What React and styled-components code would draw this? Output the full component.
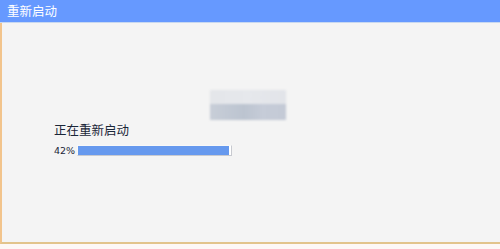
import React from 'react';
import styled, { createGlobalStyle } from 'styled-components';

const GlobalStyle = createGlobalStyle`
  html, body { margin: 0; padding: 0; background: #f4f4f4; }
  body { font-family: "Noto Sans CJK SC", "Liberation Sans", sans-serif; }
`;

const Window = styled.div`
  width: 500px;
  height: 249px;
  display: flex;
  flex-direction: column;
  background: #fdf8f6;
  overflow: hidden;
`;

const TitleBar = styled.div`
  height: 22px;
  flex: none;
  background: #6699ff;
  color: #ffffff;
  font-size: 12.5px;
  line-height: 21px;
  padding-left: 7px;
  border-bottom: 1px solid #c8d8f0;
`;

const Body = styled.div`
  flex: none;
  height: 219px;
  background: #f4f4f4;
  border-left: 2px solid #f2c48c;
  border-bottom: 2px solid #e2c48c;
  position: relative;
`;

const Blur = styled.div`
  position: absolute;
  left: 208px;
  top: 67px;
  width: 76px;
  height: 30px;
  display: flex;
  flex-direction: column;
  filter: blur(1px);
`;

const BlurTop = styled.div`
  flex: 1;
  background: linear-gradient(90deg, #e4e6ea, #e6e8ec 50%, #e2e4e9);
`;

const BlurBottom = styled.div`
  flex: 1.1;
  background: linear-gradient(90deg, #c8ced8, #bcc4d0 45%, #c6ccd8 70%, #c4cad6);
`;

const Content = styled.div`
  position: absolute;
  left: 52px;
  top: 98px;
  display: flex;
  flex-direction: column;
  gap: 6px;
`;

const Status = styled.div`
  font-size: 12.5px;
  color: #1a2638;
  line-height: 18px;
`;

const Row = styled.div`
  display: flex;
  align-items: center;
  gap: 4px;
`;

const Percent = styled.span`
  font-family: "DejaVu Sans", sans-serif;
  font-size: 9.5px;
  color: #1a2638;
  width: 19px;
`;

const Track = styled.div`
  width: 153px;
  height: 9px;
  border: 1px solid #f8f8f8;
  border-right-color: #c8cad0;
  border-bottom-color: #c8cad0;
  background: #ffffff;
`;

const Fill = styled.div`
  height: 100%;
  background: #6699ee;
`;

export default function App() {
  return (
    <>
      <GlobalStyle />
      <Window>
        <TitleBar>重新启动</TitleBar>
        <Body>
          <Blur>
            <BlurTop />
            <BlurBottom />
          </Blur>
          <Content>
            <Status>正在重新启动</Status>
            <Row>
              <Percent>42%</Percent>
              <Track>
                <Fill style={{ width: '99%' }} />
              </Track>
            </Row>
          </Content>
        </Body>
      </Window>
    </>
  );
}
